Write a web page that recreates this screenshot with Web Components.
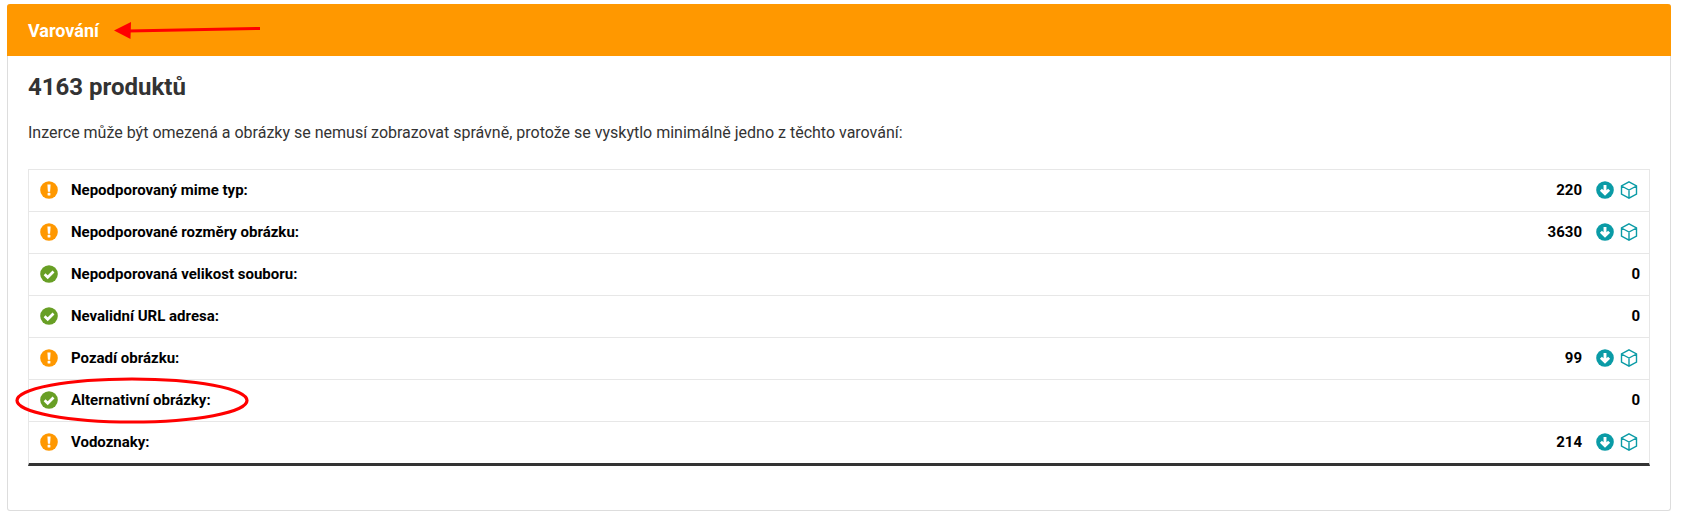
<!DOCTYPE html>
<html lang="cs">
<head>
<meta charset="utf-8">
<title>Varování</title>
<style>
  html, body { margin: 0; background: #fff; }
  body { padding: 4px 11px 7px 7px; font-family: Roboto, "Liberation Sans", sans-serif; color: #333; }
</style>
</head>
<body>
<warn-card heading="Varování" count="4163 produktů">
  <span slot="intro">Inzerce může být omezená a obrázky se nemusí zobrazovat správně, protože se vyskytlo minimálně jedno z těchto varování:</span>
  <warn-row state="warn" label="Nepodporovaný mime typ:" value="220"></warn-row>
  <warn-row state="warn" label="Nepodporované rozměry obrázku:" value="3630"></warn-row>
  <warn-row state="ok" label="Nepodporovaná velikost souboru:" value="0"></warn-row>
  <warn-row state="ok" label="Nevalidní URL adresa:" value="0"></warn-row>
  <warn-row state="warn" label="Pozadí obrázku:" value="99"></warn-row>
  <warn-row state="ok" label="Alternativní obrázky:" value="0"></warn-row>
  <warn-row state="warn" label="Vodoznaky:" value="214"></warn-row>
</warn-card>

<script>
class WarnCard extends HTMLElement {
  constructor() {
    super();
    this.attachShadow({ mode: "open" });
    this.shadowRoot.innerHTML = `
      <style>
        :host {
          display: block;
          position: relative;
          height: 507px;
          box-sizing: border-box;
          border: 1px solid #ddd;
          border-top: 0;
          border-radius: 3px;
          background: #fff;
        }
        header {
          height: 52px;
          margin: 0 -1px;
          padding-left: 21px;
          display: flex;
          align-items: center;
          background: #ff9800;
          color: #fff;
          font-size: 18px;
          font-weight: 700;
          border-radius: 3px 3px 0 0;
        }
        h2 {
          margin: 0;
          padding: 16px 0 0 20px;
          font-size: 24px;
          line-height: 30px;
          font-weight: 700;
          color: #333;
        }
        .intro {
          padding: 21px 0 0 20px;
          font-size: 16px;
          line-height: 20px;
          color: #333;
        }
        .list {
          margin: 26px 20px 0 20px;
          border: 1px solid #e7e7e7;
          border-bottom: 3px solid #333;
        }
        .marks {
          position: absolute;
          left: -7px;
          top: -4px;
          pointer-events: none;
        }
      </style>
      <header>${this.getAttribute("heading")}</header>
      <h2>${this.getAttribute("count")}</h2>
      <div class="intro"><slot name="intro"></slot></div>
      <div class="list"><slot></slot></div>
      <svg class="marks" width="300" height="440" viewBox="0 0 300 440">
        <path d="M259 28.500 L127 31" stroke="#f00" stroke-width="3" fill="none"/>
        <path d="M113 30.500 L130 22 L129.500 39 Z" fill="#f00"/>
        <ellipse cx="131" cy="400.500" rx="115" ry="21.500" fill="none" stroke="#f00" stroke-width="3.200"/>
      </svg>
    `;
  }
}

class WarnRow extends HTMLElement {
  constructor() {
    super();
    this.attachShadow({ mode: "open" });
    const ok = this.getAttribute("state") === "ok";
    const value = this.getAttribute("value");
    const stateIcon = ok
      ? `<svg class="state" viewBox="0 0 18 18"><circle cx="9" cy="9" r="8.800" fill="#689f25"/><path d="M4.600 9.300 L7.700 12.300 L13.500 6.500" fill="none" stroke="#fff" stroke-width="2.700"/></svg>`
      : `<svg class="state" viewBox="0 0 18 18"><circle cx="9" cy="9" r="8.800" fill="#ff9800"/><path d="M7.400 3.400h3.200l-.5 7.400h-2.200z" fill="#fff"/><rect x="7.600" y="11.800" width="2.800" height="2.800" rx=".6" fill="#fff"/></svg>`;
    const tools = value === "0" ? "" : `
      <span class="tools">
        <svg viewBox="0 0 18 18"><circle cx="9" cy="9" r="8.800" fill="#0a9ba6"/><path d="M9 4 V12.400 M4.900 8.700 L9 12.800 L13.100 8.700" fill="none" stroke="#fff" stroke-width="2.900"/></svg>
        <svg viewBox="0 0 18 18"><path d="M9 .9 L16.500 5 V13 L9 17.100 L1.500 13 V5 Z M1.500 5 L9 9 L16.500 5 M9 9 V17" fill="none" stroke="#0a9ba6" stroke-width="1.400"/></svg>
      </span>`;
    this.shadowRoot.innerHTML = `
      <style>
        :host {
          display: flex;
          align-items: center;
          height: 42px;
          box-sizing: border-box;
          padding: 0 9px 1px 11px;
          border-bottom: 1px solid #e7e7e7;
          font-size: 15px;
          font-weight: 700;
          color: #000;
        }
        :host(:last-child) { height: 41px; border-bottom: 0; }
        .state { width: 18px; height: 18px; flex: none; }
        .label { margin-left: 13px; flex: 1; }
        .tools { display: flex; gap: 6px; margin: 0 2px 0 14px; }
        .tools svg { width: 18px; height: 18px; display: block; }
      </style>
      ${stateIcon}
      <span class="label">${this.getAttribute("label")}</span>
      <span>${value}</span>
      ${tools}
    `;
  }
}

customElements.define("warn-card", WarnCard);
customElements.define("warn-row", WarnRow);
</script>
</body>
</html>
